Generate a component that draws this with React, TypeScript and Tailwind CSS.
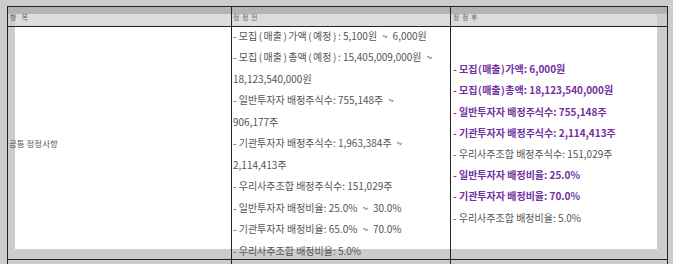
import React from "react";

type Line = { text: string; accent?: boolean };

const beforeLines: string[] = [
  "- 모집(매출)가액(예정): 5,100원 ~ 6,000원",
  "- 모집(매출)총액(예정): 15,405,009,000원 ~",
  "18,123,540,000원",
  "- 일반투자자 배정주식수: 755,148주 ~",
  "906,177주",
  "- 기관투자자 배정주식수: 1,963,384주 ~",
  "2,114,413주",
  "- 우리사주조합 배정주식수: 151,029주",
  "- 일반투자자 배정비율: 25.0% ~ 30.0%",
  "- 기관투자자 배정비율: 65.0% ~ 70.0%",
  "- 우리사주조합 배정비율: 5.0%",
];

const afterLines: Line[] = [
  { text: "- 모집(매출)가액: 6,000원", accent: true },
  { text: "- 모집(매출)총액: 18,123,540,000원", accent: true },
  { text: "- 일반투자자 배정주식수: 755,148주", accent: true },
  { text: "- 기관투자자 배정주식수: 2,114,413주", accent: true },
  { text: "- 우리사주조합 배정주식수: 151,029주" },
  { text: "- 일반투자자 배정비율: 25.0%", accent: true },
  { text: "- 기관투자자 배정비율: 70.0%", accent: true },
  { text: "- 우리사주조합 배정비율: 5.0%" },
];

// the source font sets brackets and the tilde a little wider than Noto does
const Spaced: React.FC<{ text: string; bold?: boolean }> = ({ text, bold }) => (
  <>
    {text.split(/([()~])/).map((part, i) => {
      if (part === "~")
        return (
          <span key={i} className="inline-block w-[11px] text-center">
            ~
          </span>
        );
      if (part === "(" || part === ")")
        return (
          <span key={i} className={bold ? "px-[0.5px]" : "px-[1.5px]"}>
            {part}
          </span>
        );
      return <React.Fragment key={i}>{part}</React.Fragment>;
    })}
  </>
);

const App: React.FC = () => {
  return (
    <div
      className="relative w-[673px] h-[264px] overflow-hidden bg-[#cccccc]"
      style={{ fontFamily: '"Noto Sans CJK KR", "Noto Sans", sans-serif' }}
    >
      {/* page backdrop behind the table */}
      <div className="pointer-events-none absolute left-[8px] top-[7px] w-[659px] h-[7px] bg-[#b3b3b3]" />
      <div className="pointer-events-none absolute left-[15px] top-[14px] w-[642px] h-[12px] bg-[#dcdcdc]" />
      <div className="pointer-events-none absolute left-[15px] top-[27px] w-[642px] h-[222px] bg-white" />

      <div className="relative ml-[7px] mt-[6px] w-[661px] border border-[#222]">
        <div className="grid grid-cols-[224px_219px_216px] text-[7px] text-[#666] leading-none">
          <div className="flex h-[20px] items-center gap-[5px] border-r border-b border-[#222] pl-[2px] pt-[2px]">
            <span>항</span>
            <span>목</span>
          </div>
          <div className="flex h-[20px] items-center border-r border-b border-[#222] pl-[1px] pt-[2px] tracking-[0.5px]">
            정 정 전
          </div>
          <div className="flex h-[20px] items-center border-b border-[#222] pl-[2px] pt-[2px] tracking-[0.5px]">
            정 정 후
          </div>
        </div>

        <div className="grid grid-cols-[224px_219px_216px] text-[#555]">
          <div className="flex h-[233px] items-center border-r border-b border-[#222] pl-[1px] text-[8.5px]">
            공통 정정사항
          </div>
          <div className="flex h-[233px] flex-col justify-center border-r border-b border-[#222] pl-[1px] text-[10px]">
            {beforeLines.map((l) => (
              <div key={l} className="whitespace-nowrap leading-[21.5px]">
                <Spaced text={l} />
              </div>
            ))}
          </div>
          <div className="flex h-[233px] flex-col justify-center border-b border-[#222] pl-[2px] text-[10px]">
            {afterLines.map((l) => (
              <div
                key={l.text}
                className={
                  l.accent
                    ? "whitespace-nowrap leading-[21.2px] font-bold text-[#7030a0]"
                    : "whitespace-nowrap leading-[21.2px]"
                }
              >
                <Spaced text={l.text} bold={l.accent} />
              </div>
            ))}
          </div>
        </div>

        <div className="grid grid-cols-[224px_219px_216px]">
          <div className="h-[20px] border-r border-[#222]" />
          <div className="h-[20px] border-r border-[#222]" />
          <div className="h-[20px]" />
        </div>
      </div>
    </div>
  );
};

export default App;
